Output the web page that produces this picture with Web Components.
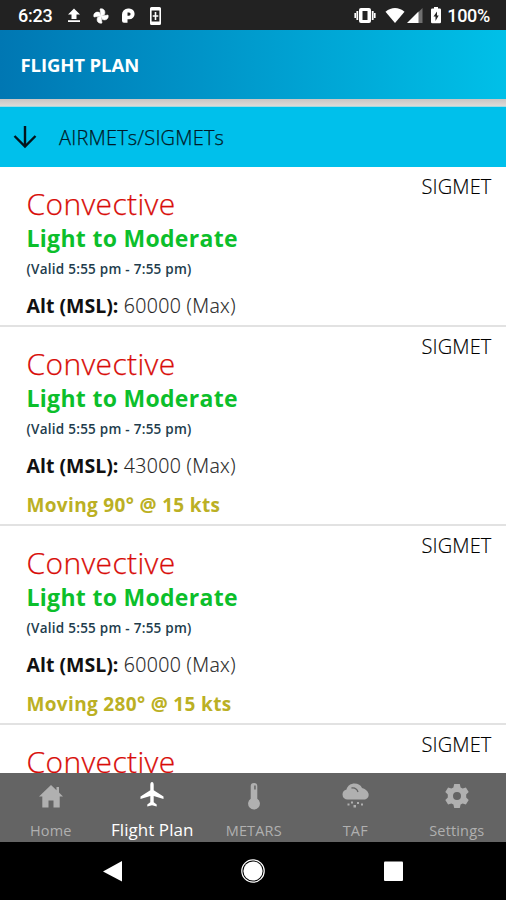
<!DOCTYPE html>
<html lang="en">
<head>
<meta charset="utf-8">
<title>Flight Plan</title>
<style>
body{margin:0;background:#000;font-family:"Open Sans",sans-serif}
</style>
</head>
<body>
<flight-app></flight-app>
<script>
const define = (name, html, setup) => customElements.define(name, class extends HTMLElement {
  constructor(){
    super();
    const t = document.createElement('template');
    t.innerHTML = html;
    this.attachShadow({mode:'open'}).append(t.content.cloneNode(true));
    if (setup) setup(this);
  }
});

define('status-bar', `
<style>
:host{display:flex;align-items:center;height:30px;box-sizing:border-box;padding:2px 16px 0 18px;background:#222;color:#fff;font:500 18px/28px Roboto,sans-serif}
svg{display:block;flex:none;fill:#fff}
.time{width:48px;letter-spacing:-.2px}
.sp{flex:1}
.pct{letter-spacing:-.3px;margin-left:5px}
</style>
<span class="time">6:23</span>
<svg width="16" height="18" viewBox="0 0 16 18"><path d="M8 1.500l6 6h-3.500v4.500h-5v-4.500h-3.500zM2 13.200h12v1.800h-12z"/></svg>
<svg width="18" height="18" viewBox="0 0 18 18" style="margin-left:10px"><path d="M9 9L8 2c3-1 6 1.500 4.500 5.500zM9 9l7-1c1 3-1.500 6-5.500 4.500zM9 9l1 7c-3 1-6-1.500-4.500-5.500zM9 9l-7 1c-1-3 1.500-6 5.500-4.500z" stroke="#fff" stroke-width=".6"/></svg>
<svg width="18" height="18" viewBox="0 0 18 18" style="margin-left:9px"><path fill-rule="evenodd" d="M3 7.500a6 6 0 0 1 6-6h1.200a5.400 5.400 0 0 1 0 10.800h-1.700v3.500h-3.500a2 2 0 0 1-2-2zM8.500 5.500v3.200h1.500a1.600 1.600 0 0 0 0-3.200z"/></svg>
<svg width="16" height="20" viewBox="0 0 16 20" style="margin-left:11px"><path fill-rule="evenodd" d="M3.500 1h8a1.500 1.500 0 0 1 1.500 1.500v15a1.500 1.500 0 0 1-1.500 1.500h-8a1.500 1.500 0 0 1-1.500-1.500v-15a1.500 1.500 0 0 1 1.500-1.500zM3.600 4.500v11h7.800v-11zM6.700 6h1.600v3.200h2v1.600h-2v3.200h-1.600v-3.200h-2v-1.600h2z"/></svg>
<span class="sp"></span>
<svg width="22" height="18" viewBox="0 0 22 18"><path fill-rule="evenodd" d="M7 1h8a2 2 0 0 1 2 2v11a2 2 0 0 1-2 2h-8a2 2 0 0 1-2-2v-11a2 2 0 0 1 2-2zM8.500 4v9h5v-9zM2.400 4h1.800v9h-1.800zM17.800 4h1.800v9h-1.800zM.4 6h1.600v5h-1.600zM20 6h1.600v5h-1.600z"/></svg>
<svg width="20" height="18" viewBox="0 0 20 18" style="margin-left:9px"><path d="M.5 4.700c6-5 13-5 19 0l-9.500 11.300z"/></svg>
<svg width="16" height="18" viewBox="0 0 16 18" style="margin-left:2px"><path opacity=".35" d="M15.500 1v15H11V5.500z"/><path d="M0 16L11.500 4.500v11.500z"/></svg>
<svg width="12" height="18" viewBox="0 0 12 18" style="margin-left:7px"><path fill-rule="evenodd" d="M4 0h4v1.500h1.800a1.200 1.200 0 0 1 1.200 1.200v12.300a1.200 1.200 0 0 1-1.200 1.200h-7.600a1.200 1.200 0 0 1-1.200-1.200v-12.300a1.200 1.200 0 0 1 1.200-1.200h1.800zM7 4.500l-3.500 5h2v4.500l3.200-5.500h-1.700z"/></svg>
<span class="pct">100%</span>
`);

define('page-header', `
<style>
:host{display:flex;align-items:center;height:69px;padding:0 20.500px 1px;box-sizing:border-box;background:linear-gradient(90deg,#0077b3,#00c0e8);color:#fff;font-weight:700;font-size:18.500px;letter-spacing:-.1px}
</style><slot></slot>`);

define('section-bar', `
<style>
:host{display:flex;align-items:center;height:68px;box-sizing:border-box;padding-top:8px;background:linear-gradient(#c9c5c4,#dedad7 7px,#a5d8e0 7px,#a5d8e0 8px,#00c0eb 8px);color:#001a28;padding-left:13px;font-size:20px;font-weight:300;letter-spacing:.18px;-webkit-text-stroke:.25px #001a28}
svg{width:24px;height:24px;margin-right:22px;fill:none;stroke:#04141c;stroke-width:2.4}
</style><svg viewBox="0 0 24 24"><path d="M12 1v20M1.500 11L12 21.500 22.500 11"/></svg><slot></slot>`);

define('sigmet-card', `
<style>
:host{display:grid;grid-template-columns:1fr auto;align-content:start;height:199px;box-sizing:border-box;border-bottom:2px solid #e2e2e2;padding:0 14.500px 0 26.500px;background:#fff;white-space:nowrap}
:host([short]){height:160px}
.main{padding-top:17px}
h2,h3,p{margin:0}
h2{font-weight:300;font-size:30px;line-height:39px;margin-bottom:1px;color:#d80c08;letter-spacing:.35px;-webkit-text-stroke:.25px #d80c08}
h3{font-weight:700;font-size:23px;line-height:28px;color:#0cbf2b;letter-spacing:.3px}
.valid{font-weight:600;font-size:13.500px;line-height:18px;color:#213c4c;margin-top:8px;letter-spacing:.25px}
.alt{font-weight:300;font-size:19.500px;line-height:26px;color:#222;margin-top:15px;letter-spacing:.35px;-webkit-text-stroke:.15px #222}
.alt b{font-weight:700;color:#111;letter-spacing:0;-webkit-text-stroke:0}
.move{font-weight:700;font-size:19px;line-height:26px;color:#bbb024;margin-top:13px;letter-spacing:.34px}
.tag{font-weight:300;font-size:20px;line-height:26px;color:#000;padding-top:7px;letter-spacing:.15px;-webkit-text-stroke:.15px #000}
</style>
<div class="main"><h2><slot name="kind"></slot></h2><h3><slot name="level"></slot></h3>
<p class="valid"><slot name="valid"></slot></p><p class="alt"><b>Alt (MSL):</b> <slot name="alt"></slot></p><p class="move"><slot name="move"></slot></p></div>
<span class="tag">SIGMET</span>`);

const icons = {
  home:'<path d="M12 1L0 12.500h3.300v11h6.200v-7h5v7h6.200v-11H24L20 8.500V3h-2.500v3.200z"/>',
  plane:'<path d="M12 0c-1.100 0-1.700 1.200-1.700 2.800v5.500L.5 14.500v2.500l9.800-3v6.200l-3 2.300v2l4.700-1.300 4.700 1.300v-2l-3-2.300V14l9.800 3v-2.500l-9.800-6.200V2.800C13.700 1.200 13.100 0 12 0z"/>',
  temp:'<path fill-rule="evenodd" d="M8.700 2.200a3.300 3.300 0 0 1 6.600 0v12.500a5.900 5.900 0 1 1-6.600 0zM12.200 1.500v4h1.500v-4z"/>',
  cloud:'<path d="M5 15.500a5 5 0 0 1-5.500-5c0-2.500 1.500-4.500 4-5C4.500 1.500 8-.5 11.500-.5c3.500 0 6.500 1.500 7.500 4.500 3 1 5.500 2.500 6.500 5.500.8 3.500-1.500 6-4.500 6z"/><path d="M8.500 4c3-.5 5.500 1 6.500 4" fill="none" stroke="#646464" stroke-width="1.300"/><path d="M4.500 19.500h2v2h-2zM8 17.500h2v2h-2zM10.500 21h2.500v2.500H10.500zM14 18h2v2h-2zM18 19.500h2v2h-2z"/>',
  gear:'<path fill-rule="evenodd" d="M9.200 0h5.600l.8 3.500 2 1.100L20.900 3.500l2.800 4.600-2.500 2.300v3.200l2.500 2.300-2.800 4.600-3.300-1.100-2 1.100-.8 3.500H9.200l-.8-3.500-2-1.100-3.300 1.100-2.800-4.600 2.500-2.300v-3.200L.3 8.100l2.800-4.600 3.300 1.100 2-1.100zM12 8a4 4 0 1 0 0 8 4 4 0 0 0 0-8z"/>'
};
define('tab-item', `
<style>
:host{flex:0 0 101.500px;display:flex;flex-direction:column;align-items:center;color:#b0b0b0;font-size:14.500px;line-height:20px;white-space:nowrap;padding-top:11px;letter-spacing:.15px}
:host([active]){color:#fff;font-size:17px;padding-top:9px;letter-spacing:.05px}
svg{width:24px;height:24px;fill:currentColor;overflow:visible;margin-bottom:13px}
:host([active]) svg{margin-bottom:14px}
</style><svg viewBox="0 0 24 24"></svg><slot></slot>`, el => {
  el.shadowRoot.querySelector('svg').innerHTML = icons[el.getAttribute('icon')];
});
define('tab-bar', `
<style>:host{display:flex;height:69px;background:#646464;overflow:hidden}</style><slot></slot>`);

define('system-nav', `
<style>
:host{display:flex;height:58px;align-items:center;justify-content:center;background:#000;gap:117px}
svg{display:block;width:24px;height:24px;fill:#fff;overflow:visible}
</style>
<svg viewBox="0 0 24 24"><path d="M22 2v20.500L3 12.500z"/></svg>
<svg viewBox="0 0 24 24"><circle cx="12" cy="12" r="9.600"/><circle cx="12" cy="12" r="11.200" fill="none" stroke="#fff" stroke-width="1.200"/></svg>
<svg viewBox="0 0 24 24"><rect x="2" y="2.500" width="19" height="19.500" rx="1"/></svg>`);

const card = (alt, move) => `<sigmet-card${move ? '' : ' short'}><span slot="kind">Convective</span><span slot="level">Light to Moderate</span><span slot="valid">(Valid 5:55 pm - 7:55 pm)</span><span slot="alt">${alt} (Max)</span>${move ? `<span slot="move">${move}</span>` : ''}</sigmet-card>`;
define('flight-app', `
<style>
:host{display:flex;flex-direction:column;width:506px;height:900px;overflow:hidden}
main{flex:1;min-height:0;overflow:hidden;background:#fff}
</style>
<status-bar></status-bar>
<page-header>FLIGHT PLAN</page-header>
<section-bar>AIRMETs/SIGMETs</section-bar>
<main>${card('60000')}${card('43000','Moving 90° @ 15 kts')}${card('60000','Moving 280° @ 15 kts')}${card('60000')}</main>
<tab-bar><tab-item icon="home">Home</tab-item><tab-item icon="plane" active>Flight Plan</tab-item><tab-item icon="temp">METARS</tab-item><tab-item icon="cloud">TAF</tab-item><tab-item icon="gear">Settings</tab-item></tab-bar>
<system-nav></system-nav>`);
</script>
</body>
</html>
